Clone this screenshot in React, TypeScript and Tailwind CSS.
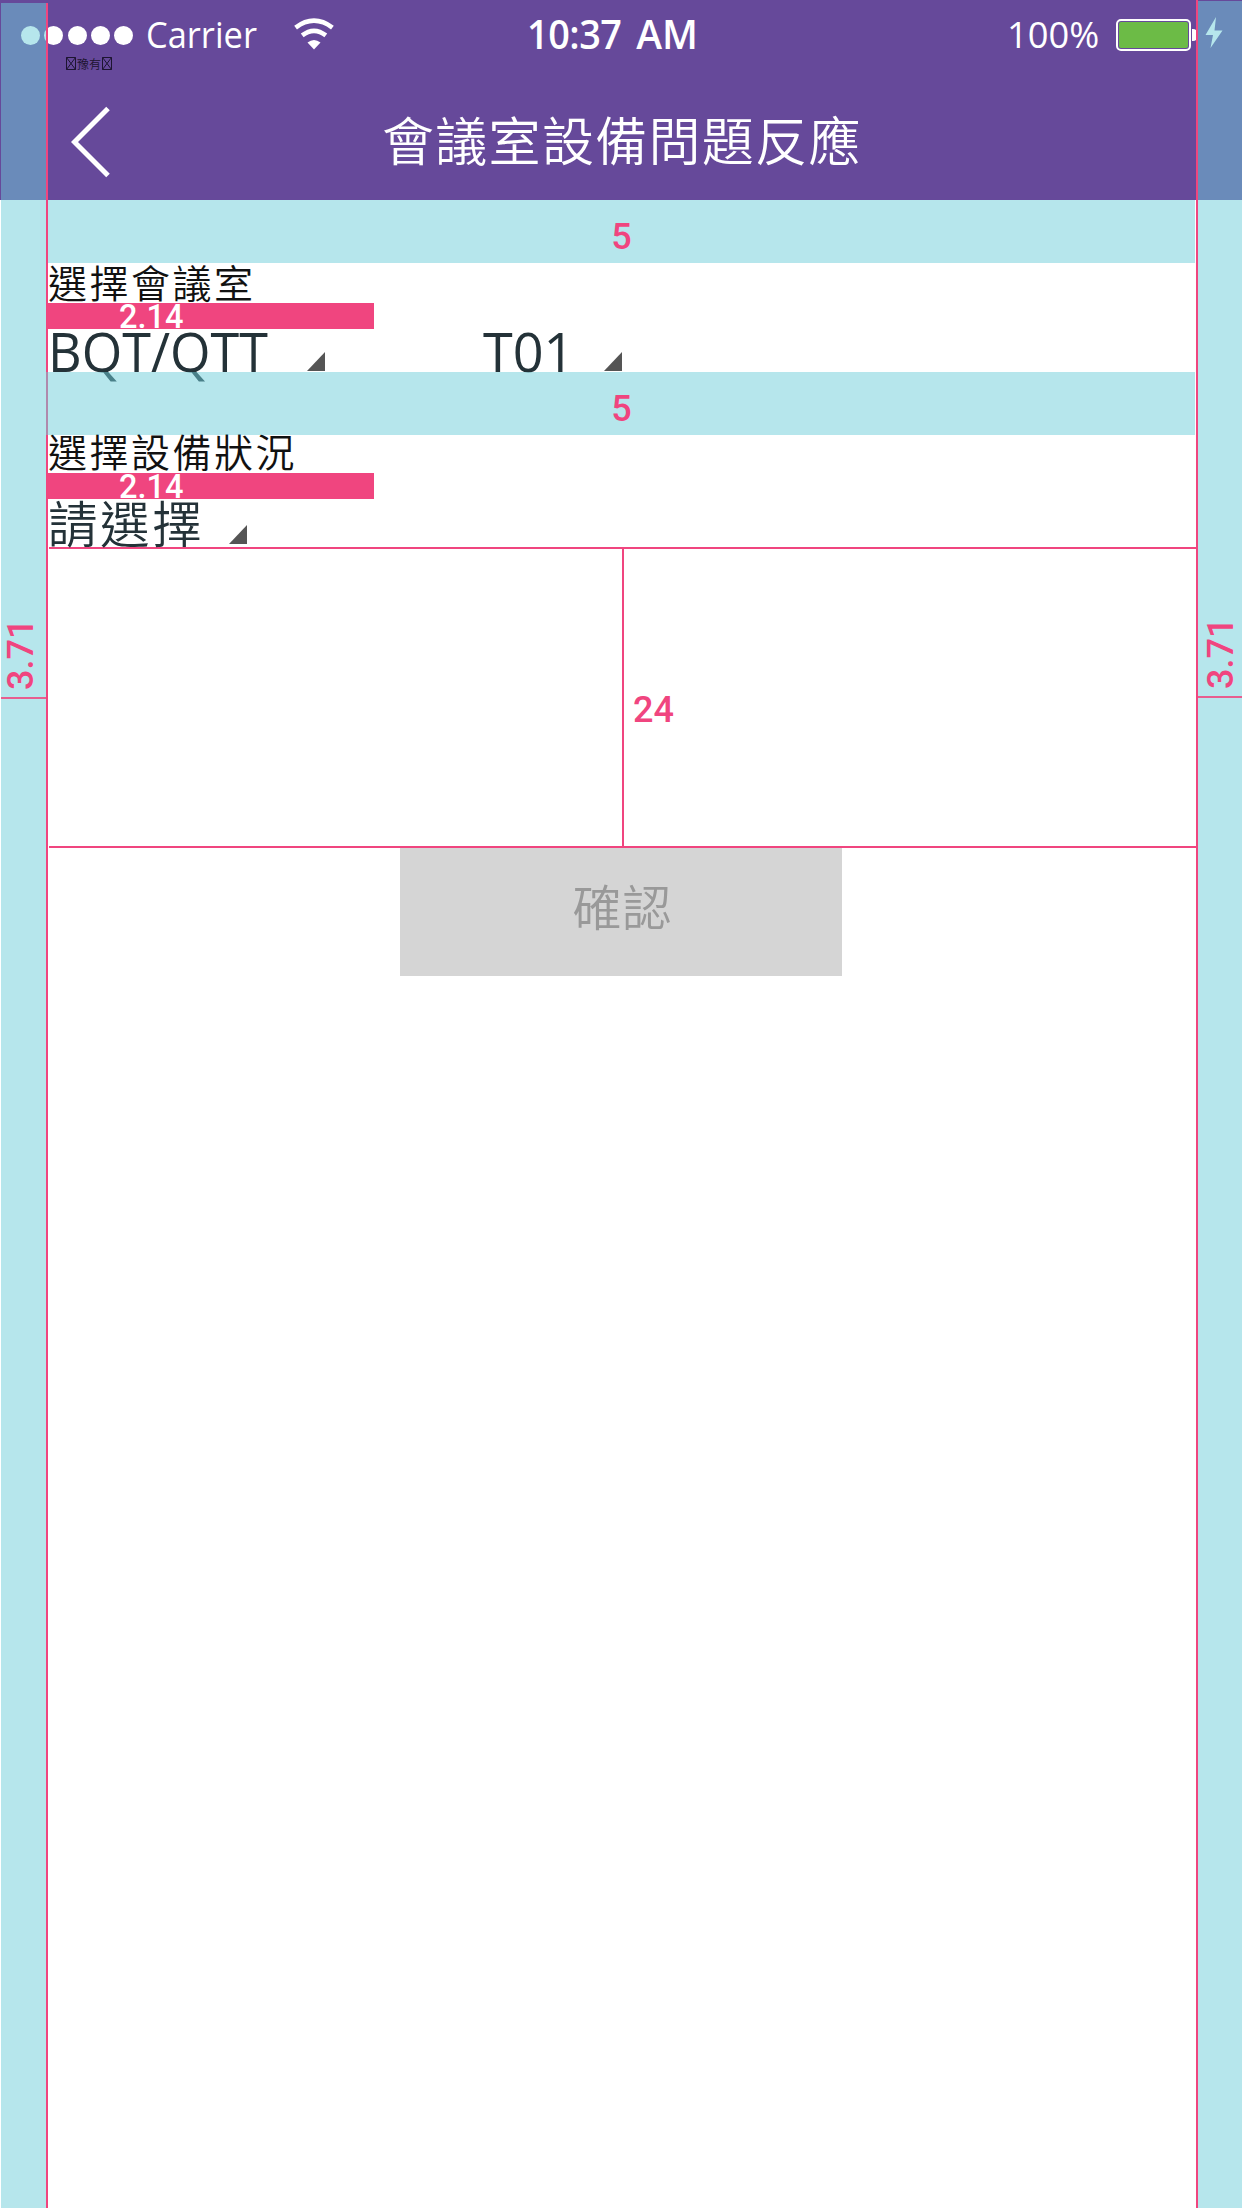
import type { ReactNode } from "react";

const CJK = "font-['Noto_Sans_CJK_TC',sans-serif] font-[350]";

function StatusBar() {
  return (
    <div className="flex h-[70px] items-center pl-[21px] text-white">
      <div className="flex gap-[4.3px]">
        {[0, 1, 2, 3, 4].map((i) => (
          <span key={i} className="size-[19px] shrink-0 rounded-full bg-white" />
        ))}
      </div>
      <span className="ml-[13px] mt-[-3px] w-[112px] shrink-0 origin-left scale-x-[0.93] whitespace-nowrap font-['Open_Sans',sans-serif] text-[37px] leading-none">
        Carrier
      </span>
      <svg className="ml-[36px] mt-[-2px] h-[32px] w-[40px] shrink-0" viewBox="0 0 40 32" fill="none">
        <path d="M1.6 9.6Q20 -4.200 38.4 9.6" stroke="#fff" strokeWidth="4.6" />
        <path d="M8.2 17.4Q20 8.2 31.8 17.4" stroke="#fff" strokeWidth="4.6" />
        <path d="M13.5 24.4Q20 19.4 26.500 24.4L20 31.500Z" fill="#fff" />
      </svg>
      <div className="ml-[193px] mt-[-3px] flex w-[175px] shrink-0 gap-[15px] whitespace-nowrap font-['Open_Sans',sans-serif] text-[39px] font-semibold leading-none">
        <span className="w-[94px] origin-left scale-x-[0.97] tracking-[-0.5px]">10:37</span>
        <span>AM</span>
      </div>
      <span className="ml-[305px] mt-[-3px] w-[92px] shrink-0 origin-left scale-x-[0.98] whitespace-nowrap font-['Open_Sans',sans-serif] text-[37px] leading-none">
        100%
      </span>
      <div className="ml-[17px] flex h-[32px] w-[75px] shrink-0 rounded-[5px] border-2 border-white p-px">
        <div className="flex-1 rounded-[2px] bg-[#6cbb46]" />
      </div>
      <span className="ml-px h-[12px] w-[5px] shrink-0 rounded-r-[4px] bg-white" />
      <svg className="ml-[8px] mt-[-5px] h-[32px] w-[18px] shrink-0" viewBox="0 0 18 32" fill="#fff">
        <path d="M11 0L0.500 18H8L5.500 31L17.500 13.500H9.500Z" />
      </svg>
    </div>
  );
}

function MissingGlyph() {
  return (
    <svg className="h-[13px] w-[10px]" viewBox="0 0 10 13" fill="none" stroke="#1d1430">
      <path d="M.5.5h9v12h-9zM.5.5l9 12M9.500.5l-9 12" />
    </svg>
  );
}

function Header() {
  return (
    <header className="relative h-[200px] bg-[#66499a]">
      <StatusBar />
      <div className="flex h-[130px] pl-[71px] pt-[36px]">
        <svg className="h-[72px] w-[40px]" viewBox="0 0 40 72" fill="none" stroke="#fff" strokeWidth="5">
          <path d="M37 2.500L3.500 36L37 69.500" />
        </svg>
        <h1 className={`${CJK} ml-[271px] mt-[7px] whitespace-nowrap text-[52px] leading-none tracking-[1.3px] text-white`}>
          會議室設備問題反應
        </h1>
      </div>
      <div className="absolute left-[66px] top-[57px] flex items-center gap-px text-[#1d1430]">
        <MissingGlyph />
        <span className={`${CJK} text-[12px] leading-[13px]`}>豫有</span>
        <MissingGlyph />
      </div>
    </header>
  );
}

function Band({ className = "" }: { className?: string }) {
  return (
    <div
      className={`${className} ml-[-2px] flex h-[62.5px] w-[1149px] items-center justify-center bg-[#6dcdda]/50 pl-[2px] font-[Roboto,sans-serif] text-[36px] font-medium leading-none text-[#f0457f]`}
    >
      <span className="pt-[12px]">5</span>
    </div>
  );
}

function Gap() {
  return (
    <div className="h-[26px] w-[326px] bg-[#f0457f] pl-[71px] font-[Roboto,sans-serif] text-[32.5px] font-medium leading-[28px] text-white">
      2.14
    </div>
  );
}

function Triangle() {
  return (
    <svg className="h-[19px] w-[18px] shrink-0" viewBox="0 0 18 19" fill="#555">
      <path d="M18 0V19H0Z" />
    </svg>
  );
}

function Label({ children }: { children: ReactNode }) {
  return <div className={`${CJK} whitespace-nowrap text-[39px] tracking-[2.5px] text-[#111]`}>{children}</div>;
}

function SideMargin({ className, label }: { className: string; label: string }) {
  return (
    <div className={`absolute ${className}`}>
      <div className="flex h-full w-full justify-center">
        <span className="rotate-180 font-[Roboto,sans-serif] text-[36px] font-medium leading-none text-[#f0457f] [writing-mode:vertical-rl]">
          {label}
        </span>
      </div>
    </div>
  );
}

export default function App() {
  return (
    <div className="relative h-[2208px] w-[1242px] overflow-hidden bg-white">
      <Header />
      <div className="absolute left-px top-[3px] h-[2205px] w-[45px] bg-[#6dcdda]/50" />
      <div className="absolute right-0 top-px h-[2207px] w-[44px] bg-[#6dcdda]/50" />
      <div className="absolute left-[46px] top-[3px] h-[2205px] w-[2px] bg-[#f0457f]" />
      <div className="absolute left-[1196px] top-0 h-[2208px] w-[2px] bg-[#f0457f]" />
      <SideMargin className="left-px top-[624px] h-[66px] w-[40px]" label="3.71" />
      <SideMargin className="left-[1201px] top-[623px] h-[66px] w-[40px]" label="3.71" />
      <div className="absolute left-px top-[697px] h-[2px] w-[45px] bg-[#f0457f]/85" />
      <div className="absolute left-[1198px] top-[696px] h-[2px] w-[44px] bg-[#f0457f]/85" />

      <main className="pl-[48px]">
        <Band />
        <div className="h-[40.5px] leading-[36px]">
          <Label>選擇會議室</Label>
        </div>
        <Gap />
        <div className="flex h-[43px] font-['Open_Sans',sans-serif] text-[54px] leading-[45px] text-[#243238]">
          <span className="w-[259px] origin-left scale-x-[0.965] whitespace-nowrap">BQT/QTT</span>
          <span className="mt-[23px]"><Triangle /></span>
          <span className="ml-[158px] w-[121px]">T01</span>
          <span className="mt-[23px]"><Triangle /></span>
        </div>
        <Band className="relative" />
        <div className="h-[38.5px] leading-[31px]">
          <Label>選擇設備狀況</Label>
        </div>
        <Gap />
        <div className={`${CJK} flex h-[48px] whitespace-nowrap text-[49.5px] leading-[45px] tracking-[2.6px] text-[#243238]`}>
          <span className="w-[181px]">請選擇</span>
          <span className="mt-[26px] leading-none"><Triangle /></span>
        </div>
        <div className="ml-px flex h-[301px] w-[1147px] border-y-2 border-[#f0457f]">
          <div className="w-[573px]" />
          <div className="w-[2px] bg-[#f0457f]" />
          <span className="ml-[9px] mt-[143px] font-[Roboto,sans-serif] text-[36px] font-medium leading-none text-[#f0457f]">
            24
          </span>
        </div>
        <button
          className={`${CJK} ml-[352px] flex h-[128px] w-[442px] justify-center bg-[#d5d5d5] pl-[3px] pt-[32px] text-[49px] leading-none tracking-[1px] text-[#999]`}
        >
          確認
        </button>
      </main>
    </div>
  );
}
